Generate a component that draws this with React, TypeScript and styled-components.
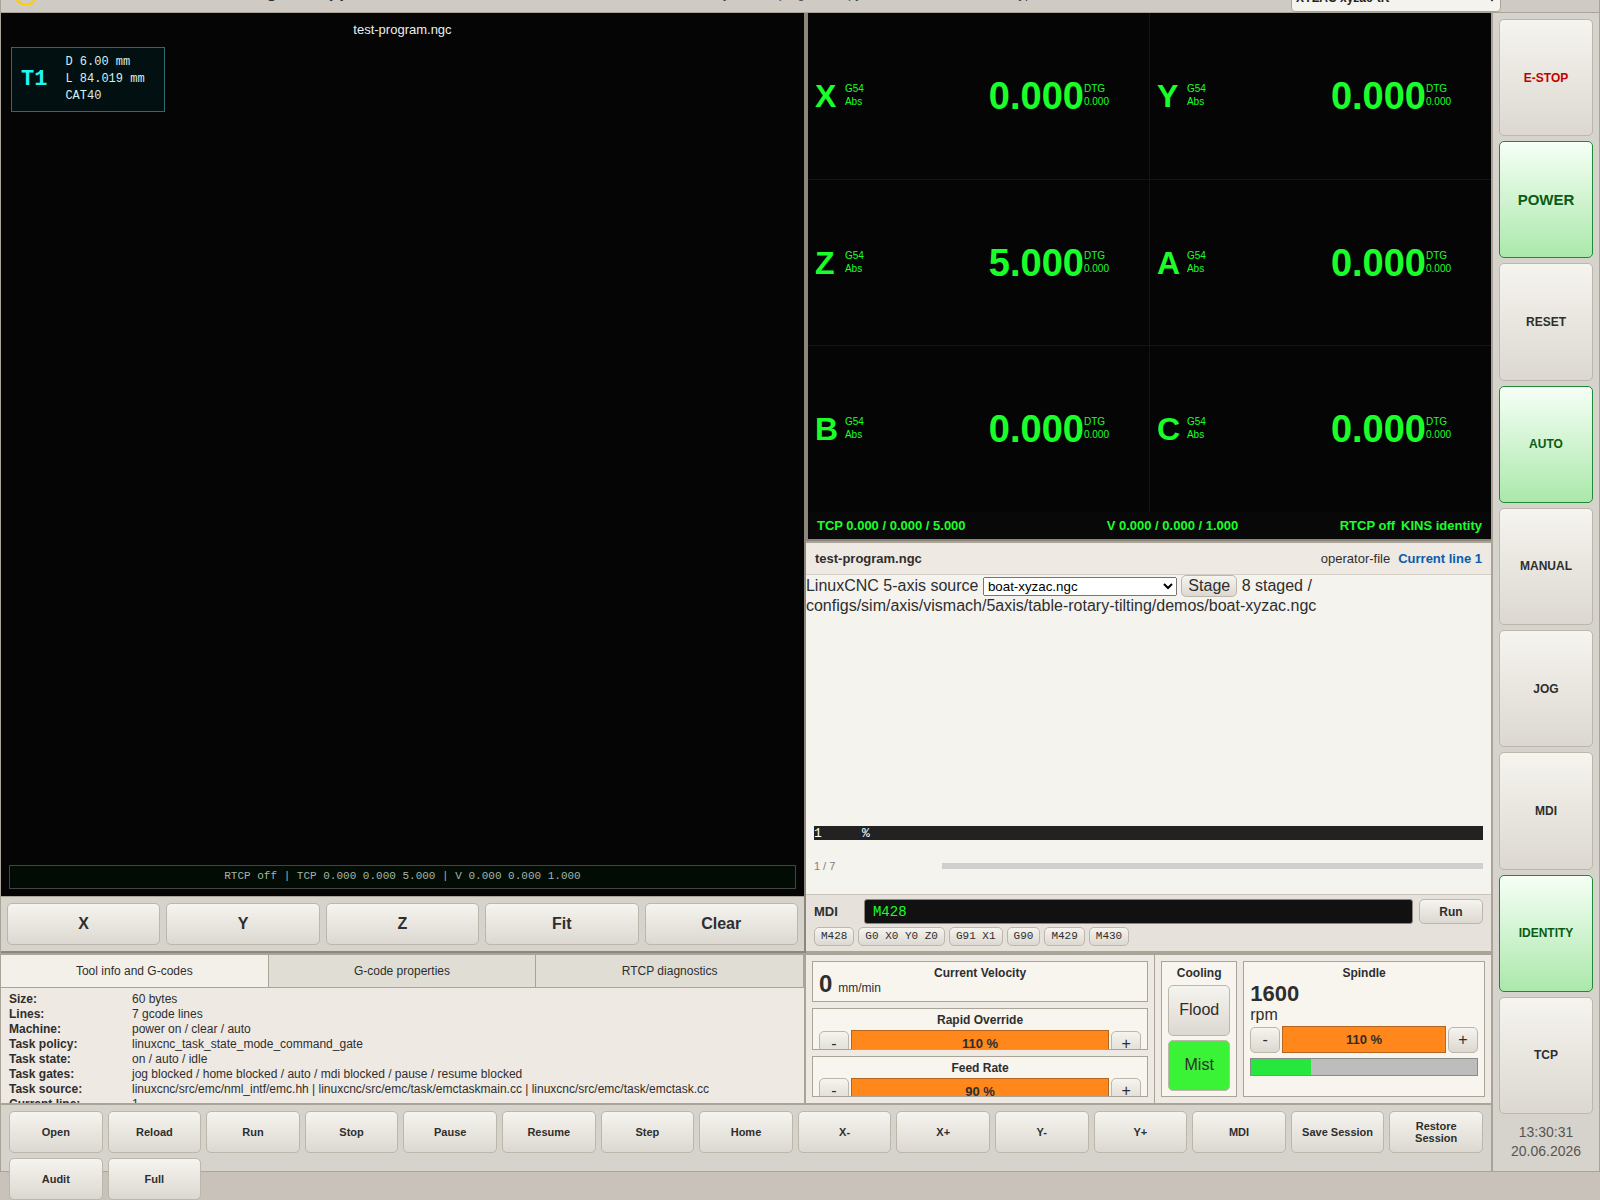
import React from "react";
import styled, { createGlobalStyle, css } from "styled-components";

const line = "#a9a497";
const lineDark = "#8c867c";
const surface = "#d6d3cc";
const panel = "#eee9e3";
const ink = "#2e2e2e";
const green = "#1aff2a";
const mono = `"Liberation Mono", "Courier New", monospace`;
const sans = `"Liberation Sans", Arial, sans-serif`;

const GlobalStyle = createGlobalStyle`
  *, *::before, *::after { box-sizing: border-box; }
  body {
    margin: 0;
    background: #c8c2ba;
    color: ${ink};
    font-family: ${sans};
    font-size: 16px;
  }
`;

const Viewport = styled.div`
  height: 100vh;
  overflow: hidden;
`;

const Shell = styled.div`
  display: grid;
  grid-template-columns: minmax(0, 1fr) 108px;
  grid-template-rows: 40px minmax(0, 1fr);
  height: 100vh;
  margin-top: -28px;
  border: 1px solid ${line};
  background: ${surface};
`;

const Header = styled.header`
  grid-column: 1 / -1;
  display: grid;
  grid-template-columns: 37px 640px minmax(0, 1fr) 210px;
  align-items: center;
  padding: 0 98px 0 14px;
  background: #cfcac3;
  border-bottom: 1px solid ${line};
`;

const Title = styled.h1`
  margin: 0;
  font-size: 17px;
  line-height: 20px;
`;

const HeaderStatus = styled.span`
  padding-top: 2px;
  font-size: 13px;
  color: #444;
  white-space: nowrap;
`;

const ConfigSelect = styled.select`
  align-self: end;
  height: 28px;
  padding: 0;
  border: 1px solid ${line};
  border-radius: 4px;
  background: #f5f3ee;
  color: #222;
  font: bold 12px ${sans};
`;

const Main = styled.main`
  display: grid;
  grid-template-columns: minmax(0, 235fr) minmax(0, 200fr);
  grid-template-rows: minmax(0, 1fr) 150px 68px;
`;

const buttonFace = css`
  border: 1px solid #bcb6ab;
  border-radius: 5px;
  background: linear-gradient(#f6f4ef, #dcd8d1);
  color: ${ink};
  font-family: ${sans};
  padding: 1px 6px;
`;

/* ---------- preview ---------- */

const Preview = styled.section`
  display: flex;
  flex-direction: column;
  border-right: 2px solid ${lineDark};
  border-bottom: 2px solid ${lineDark};
`;

const Canvas = styled.div`
  position: relative;
  flex: 1;
  display: flex;
  flex-direction: column;
  justify-content: space-between;
  padding: 9px 8px 7px;
  background: #050505;
`;

const FileName = styled.div`
  text-align: center;
  color: #eee;
  font-size: 13px;
  line-height: 15px;
`;

const ToolBadge = styled.div`
  position: absolute;
  left: 10px;
  top: 34px;
  display: flex;
  align-items: center;
  gap: 18px;
  width: 154px;
  height: 65px;
  padding: 0 9px;
  border: 1px solid #2d6a6e;
  background: #031012;
  font-family: ${mono};
`;

const ToolNumber = styled.strong`
  color: #22f5f5;
  font-size: 22px;
`;

const ToolDetail = styled.div`
  color: #d5efec;
  font-size: 12px;
  line-height: 17px;
  white-space: nowrap;
`;

const PoseBar = styled.div`
  height: 24px;
  border: 1px solid #444;
  background: #020c04;
  color: #a3b5a9;
  font: 11px/20px ${mono};
  text-align: center;
`;

const ViewButtons = styled.div`
  display: grid;
  grid-template-columns: repeat(5, minmax(0, 1fr));
  gap: 6px;
  padding: 6px;
  border-top: 1px solid ${line};
  background: ${surface};
`;

const ViewButton = styled.button`
  ${buttonFace}
  height: 42px;
  font-size: 16px;
  font-weight: bold;
`;

/* ---------- readout and program ---------- */

const RightStack = styled.div`
  display: grid;
  grid-template-rows: minmax(0, 128fr) minmax(0, 100fr);
`;

const Readout = styled.section`
  display: flex;
  flex-direction: column;
  border-left: 2px solid ${lineDark};
  border-bottom: 2px solid ${lineDark};
  color: ${green};
`;

/* The one-pixel gaps let the lighter ground show as hairlines. */
const AxisGrid = styled.div`
  flex: 1;
  display: grid;
  grid-template-columns: repeat(2, minmax(0, 1fr));
  grid-template-rows: repeat(3, minmax(0, 1fr));
  gap: 1px;
  background: #141414;
`;

const AxisCell = styled.div`
  display: grid;
  grid-template-columns: 30px 42px minmax(0, 1fr) 58px;
  align-items: center;
  padding: 0 7px;
  background: #050505;
`;

const AxisName = styled.strong`
  padding-top: 2px;
  font-size: 32px;
`;

const AxisMeta = styled.div`
  padding-bottom: 1px;
  font-size: 10px;
  line-height: 13px;
`;

const AxisValue = styled.strong`
  padding-top: 2px;
  font-size: 38px;
  text-align: right;
`;

const ReadoutFooter = styled.div`
  display: grid;
  grid-template-columns: minmax(0, 5fr) minmax(0, 4fr) auto auto;
  gap: 6px;
  align-items: center;
  height: 27px;
  padding: 0 9px;
  background: #080808;
  font-size: 13px;
  font-weight: bold;
`;

const Program = styled.section`
  display: flex;
  flex-direction: column;
  border-top: 2px solid ${line};
  border-bottom: 2px solid ${line};
  background: #f5f3ee;
`;

const ProgramHeader = styled.div`
  display: flex;
  gap: 8px;
  align-items: center;
  height: 32px;
  padding: 0 9px;
  border-bottom: 1px solid #d3cec6;
  background: ${panel};
  font-size: 13px;
`;

const ProgramName = styled.strong`
  flex: 1;
`;

const CurrentLine = styled.strong`
  color: #0b5cab;
`;

const SourcePicker = styled.div`
  flex: 1;
  line-height: 18px;
`;

const SourceSelect = styled.select`
  width: 194px;
  height: 19px;
  font-family: ${sans};
`;

const StageButton = styled.button`
  ${buttonFace}
  font-size: 16px;
  line-height: 18px;
`;

const CodeLine = styled.div`
  display: grid;
  grid-template-columns: 48px 1fr;
  height: 14px;
  margin: 0 8px;
  background: #222;
  color: #fff;
  font: 13px/16px ${mono};
`;

const ProgressRow = styled.div`
  display: grid;
  grid-template-columns: 120px 1fr;
  gap: 8px;
  align-items: center;
  height: 54px;
  padding: 0 8px 2px;
  color: #808080;
  font-size: 11px;
`;

const ProgressTrack = styled.div`
  height: 6px;
  background: #cfcfcf;
`;

const Mdi = styled.form`
  display: grid;
  grid-template-columns: 44px minmax(0, 1fr) 64px;
  column-gap: 6px;
  row-gap: 3px;
  align-items: center;
  padding: 4px 8px 5px;
  border-top: 1px solid #cbc4bb;
  background: #e6e1db;
`;

const MdiLabel = styled.label`
  font-size: 13px;
  font-weight: bold;
`;

const MdiInput = styled.input`
  height: 25px;
  min-width: 0;
  padding: 0 8px;
  border: 1px solid ${lineDark};
  border-radius: 3px;
  background: #111;
  color: ${green};
  font: 14px ${mono};
`;

const MdiRun = styled.button`
  ${buttonFace}
  height: 25px;
  font-size: 12px;
  font-weight: bold;
`;

const Chips = styled.div`
  grid-column: 1 / -1;
  display: flex;
  gap: 4px;
`;

const Chip = styled.button`
  ${buttonFace}
  height: 19px;
  padding: 0 6px 2px;
  font-family: ${mono};
  font-size: 11px;
`;

/* ---------- info tabs ---------- */

const Info = styled.section`
  display: flex;
  flex-direction: column;
  border-top: 2px solid ${line};
  border-right: 2px solid ${line};
  background: ${panel};
`;

const Tabs = styled.div`
  display: grid;
  grid-template-columns: repeat(3, minmax(0, 1fr));
  height: 33px;
  border-bottom: 1px solid ${line};
`;

const Tab = styled.button<{ $active?: boolean }>`
  border: 0;
  border-right: 1px solid ${line};
  background: ${(p) => (p.$active ? "#f3f0e9" : "#e0ddd5")};
  color: ${ink};
  font: 12px ${sans};
`;

const Facts = styled.dl`
  display: grid;
  grid-template-columns: 115px minmax(0, 1fr);
  grid-auto-rows: 15px;
  column-gap: 8px;
  flex: 1;
  min-height: 0;
  margin: 0;
  padding: 4px 8px 0;
  overflow: hidden;
  font-size: 12px;
  line-height: 15px;
`;

const FactName = styled.dt`
  font-weight: bold;
`;

const FactValue = styled.dd`
  margin: 0;
`;

/* ---------- overrides ---------- */

const Controls = styled.section`
  display: grid;
  grid-template-columns: minmax(0, 104fr) minmax(0, 100fr);
  border-top: 2px solid ${line};
  background: ${panel};
`;

const Overrides = styled.div`
  display: grid;
  grid-template-rows: repeat(3, minmax(0, 1fr));
  gap: 6px;
  min-height: 0;
  padding: 6px;
  border-right: 1px solid ${line};
`;

const Machine = styled.div`
  display: grid;
  grid-template-columns: 76px minmax(0, 1fr);
  gap: 6px;
  padding: 6px;
`;

const Card = styled.div`
  min-height: 0;
  padding: 4px 6px;
  border: 1px solid ${line};
  background: #f8f5ee;
  overflow: hidden;
`;

const CardTitle = styled.div`
  font-size: 12px;
  font-weight: bold;
  line-height: 14px;
  text-align: center;
`;

const VelocityCard = styled(Card)`
  display: grid;
  grid-template-areas: "stack";
  padding-bottom: 1px;
  & > * { grid-area: stack; }
`;

const Velocity = styled.div`
  display: flex;
  align-items: baseline;
  align-self: end;
  gap: 6px;
  font-size: 12px;
  line-height: 24px;
`;

const VelocityNumber = styled.strong`
  font-size: 24px;
`;

const Stepper = styled.div`
  display: grid;
  grid-template-columns: 30px minmax(0, 1fr) 30px;
  gap: 2px;
  align-items: center;
  margin-top: 3px;
`;

const StepButton = styled.button`
  ${buttonFace}
  height: 26px;
  font-size: 16px;
`;

const StepValue = styled.output`
  height: 27px;
  border: 1px solid #b5651d;
  background: #ff871b;
  font-size: 13px;
  font-weight: bold;
  line-height: 25px;
  text-align: center;
`;

const CoolingCard = styled(Card)`
  display: grid;
  grid-template-rows: 15px minmax(0, 1fr) minmax(0, 1fr);
  gap: 4px;
  padding-bottom: 5px;
`;

const CoolButton = styled.button<{ $on?: boolean }>`
  ${buttonFace}
  padding-bottom: 3px;
  font-size: 16px;
  ${(p) => p.$on && css`background: #3af236;`}
`;

const SpindleSpeed = styled.strong`
  display: block;
  font-size: 22px;
  line-height: 27px;
`;

const SpindleUnit = styled.div`
  line-height: 16px;
`;

const LoadTrack = styled.div`
  height: 18px;
  margin-top: 5px;
  border: 1px solid #8a8a8a;
  background: #bdbdbd;
`;

const LoadFill = styled.div`
  height: 100%;
  background: #26e83c;
`;

/* ---------- bottom toolbar and side rail ---------- */

const Toolbar = styled.nav`
  grid-column: 1 / -1;
  display: grid;
  grid-template-columns: repeat(auto-fill, minmax(90px, 1fr));
  grid-auto-rows: 42px;
  gap: 5px;
  padding: 6px 8px;
  border-top: 2px solid ${line};
`;

const ToolbarButton = styled.button`
  ${buttonFace}
  font-size: 11px;
  font-weight: bold;
  line-height: 12px;
`;

const Rail = styled.aside`
  display: grid;
  grid-template-rows: repeat(9, minmax(0, 1fr)) 46px;
  gap: 5px;
  padding: 6px;
  border-left: 2px solid ${line};
`;

const RailButton = styled.button<{ $on?: boolean; $danger?: boolean; $large?: boolean }>`
  ${buttonFace}
  font-size: ${(p) => (p.$large ? 15 : 12)}px;
  font-weight: bold;
  ${(p) => p.$danger && css`color: #c00000;`}
  ${(p) =>
    p.$on &&
    css`
      border-color: #1f8a35;
      background: linear-gradient(#f6fff6, #abe8ab);
      color: #0a5c14;
    `}
`;

const Clock = styled.div`
  display: grid;
  align-content: center;
  color: #555;
  font-size: 14px;
  line-height: 19px;
  text-align: center;
`;

const axes = [
  ["X", "0.000"],
  ["Y", "0.000"],
  ["Z", "5.000"],
  ["A", "0.000"],
  ["B", "0.000"],
  ["C", "0.000"],
];

const facts = [
  ["Size:", "60 bytes"],
  ["Lines:", "7 gcode lines"],
  ["Machine:", "power on / clear / auto"],
  ["Task policy:", "linuxcnc_task_state_mode_command_gate"],
  ["Task state:", "on / auto / idle"],
  ["Task gates:", "jog blocked / home blocked / auto / mdi blocked / pause / resume blocked"],
  [
    "Task source:",
    "linuxcnc/src/emc/nml_intf/emc.hh | linuxcnc/src/emc/task/emctaskmain.cc | linuxcnc/src/emc/task/emctask.cc",
  ],
  ["Current line:", "1"],
];

const actions = [
  "Open", "Reload", "Run", "Stop", "Pause", "Resume", "Step", "Home", "X-", "X+",
  "Y-", "Y+", "MDI", "Save Session", "Restore Session", "Audit", "Full",
];

const rail: { label: string; on?: boolean; danger?: boolean; large?: boolean }[] = [
  { label: "E-STOP", danger: true },
  { label: "POWER", on: true, large: true },
  { label: "RESET" },
  { label: "AUTO", on: true },
  { label: "MANUAL" },
  { label: "JOG" },
  { label: "MDI" },
  { label: "IDENTITY", on: true },
  { label: "TCP" },
];

function OverrideStepper({ value }: { value: string }) {
  return (
    <Stepper>
      <StepButton type="button">-</StepButton>
      <StepValue>{value}</StepValue>
      <StepButton type="button">+</StepButton>
    </Stepper>
  );
}

export default function App() {
  const spindleLoad = (1600 / 6000) * 100;
  return (
    <Viewport>
      <GlobalStyle />
      <Shell>
        <Header>
          <svg width="24" height="24" viewBox="0 0 24 24" fill="none" aria-hidden="true">
            <circle cx="11" cy="14" r="10" stroke="#ffcc00" strokeWidth="2" />
          </svg>
          <Title>LinuxCNC 5-axis machining web app</Title>
          <HeaderStatus>Ready for axis program, copy of kinematics source, idle type</HeaderStatus>
          <ConfigSelect aria-label="Machine configuration" defaultValue="xyzac">
            <option value="xyzac">XYZAC xyzac-trt</option>
          </ConfigSelect>
        </Header>

        <Main>
          <Preview>
            <Canvas>
              <FileName>test-program.ngc</FileName>
              <ToolBadge>
                <ToolNumber>T1</ToolNumber>
                <ToolDetail>
                  <div>D 6.00 mm</div>
                  <div>L 84.019 mm</div>
                  <div>CAT40</div>
                </ToolDetail>
              </ToolBadge>
              <PoseBar>RTCP off | TCP 0.000 0.000 5.000 | V 0.000 0.000 1.000</PoseBar>
            </Canvas>
            <ViewButtons>
              {["X", "Y", "Z", "Fit", "Clear"].map((v) => (
                <ViewButton key={v} type="button">{v}</ViewButton>
              ))}
            </ViewButtons>
          </Preview>

          <RightStack>
            <Readout>
              <AxisGrid>
                {axes.map(([name, value]) => (
                  <AxisCell key={name}>
                    <AxisName>{name}</AxisName>
                    <AxisMeta>
                      <div>G54</div>
                      <div>Abs</div>
                    </AxisMeta>
                    <AxisValue>{value}</AxisValue>
                    <AxisMeta>
                      <div>DTG</div>
                      <div>0.000</div>
                    </AxisMeta>
                  </AxisCell>
                ))}
              </AxisGrid>
              <ReadoutFooter>
                <span>TCP 0.000 / 0.000 / 5.000</span>
                <span>V 0.000 / 0.000 / 1.000</span>
                <span>RTCP off</span>
                <span>KINS identity</span>
              </ReadoutFooter>
            </Readout>

            <Program>
              <ProgramHeader>
                <ProgramName>test-program.ngc</ProgramName>
                <span>operator-file</span>
                <CurrentLine>Current line 1</CurrentLine>
              </ProgramHeader>
              <SourcePicker>
                <label htmlFor="source">LinuxCNC 5-axis source</label>{" "}
                <SourceSelect id="source" defaultValue="boat-xyzac.ngc">
                  <option>boat-xyzac.ngc</option>
                </SourceSelect>{" "}
                <StageButton type="button">Stage</StageButton>{" "}
                <span>8 staged / configs/sim/axis/vismach/5axis/table-rotary-tilting/demos/boat-xyzac.ngc</span>
              </SourcePicker>
              <CodeLine>
                <span>1</span>
                <span>%</span>
              </CodeLine>
              <ProgressRow>
                <span>1 / 7</span>
                <ProgressTrack />
              </ProgressRow>
              <Mdi onSubmit={(e) => e.preventDefault()}>
                <MdiLabel htmlFor="mdi">MDI</MdiLabel>
                <MdiInput id="mdi" defaultValue="M428" />
                <MdiRun type="submit">Run</MdiRun>
                <Chips>
                  {["M428", "G0 X0 Y0 Z0", "G91 X1", "G90", "M429", "M430"].map((c) => (
                    <Chip key={c} type="button">{c}</Chip>
                  ))}
                </Chips>
              </Mdi>
            </Program>
          </RightStack>

          <Info>
            <Tabs role="tablist">
              <Tab type="button" role="tab" aria-selected="true" $active>Tool info and G-codes</Tab>
              <Tab type="button" role="tab" aria-selected="false">G-code properties</Tab>
              <Tab type="button" role="tab" aria-selected="false">RTCP diagnostics</Tab>
            </Tabs>
            <Facts>
              {facts.map(([name, value]) => (
                <React.Fragment key={name}>
                  <FactName>{name}</FactName>
                  <FactValue>{value}</FactValue>
                </React.Fragment>
              ))}
            </Facts>
          </Info>

          <Controls>
            <Overrides>
              <VelocityCard>
                <CardTitle>Current Velocity</CardTitle>
                <Velocity>
                  <VelocityNumber>0</VelocityNumber>
                  <span>mm/min</span>
                </Velocity>
              </VelocityCard>
              <Card>
                <CardTitle>Rapid Override</CardTitle>
                <OverrideStepper value="110 %" />
              </Card>
              <Card>
                <CardTitle>Feed Rate</CardTitle>
                <OverrideStepper value="90 %" />
              </Card>
            </Overrides>
            <Machine>
              <CoolingCard>
                <CardTitle>Cooling</CardTitle>
                <CoolButton type="button">Flood</CoolButton>
                <CoolButton type="button" $on>Mist</CoolButton>
              </CoolingCard>
              <Card>
                <CardTitle>Spindle</CardTitle>
                <SpindleSpeed>1600</SpindleSpeed>
                <SpindleUnit>rpm</SpindleUnit>
                <OverrideStepper value="110 %" />
                <LoadTrack>
                  <LoadFill style={{ width: `${spindleLoad}%` }} />
                </LoadTrack>
              </Card>
            </Machine>
          </Controls>

          <Toolbar>
            {actions.map((a) => (
              <ToolbarButton key={a} type="button">{a}</ToolbarButton>
            ))}
          </Toolbar>
        </Main>

        <Rail>
          {rail.map((b) => (
            <RailButton key={b.label} type="button" $on={b.on} $danger={b.danger} $large={b.large}>
              {b.label}
            </RailButton>
          ))}
          <Clock>
            <span>13:30:31</span>
            <span>20.06.2026</span>
          </Clock>
        </Rail>
      </Shell>
    </Viewport>
  );
}
